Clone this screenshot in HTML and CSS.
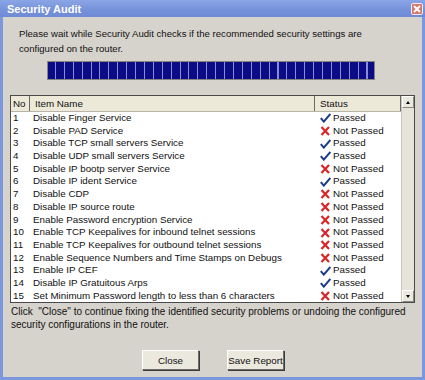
FILE: index.html
```html
<!DOCTYPE html>
<html lang="en">
<head>
    <meta charset="UTF-8">
    <title>Security Audit</title>
    <link rel="stylesheet" href="styles.css">
</head>
<body>
    <div class="window">
        <div class="titlebar">
            <span class="title">Security Audit</span>
            <span class="close-btn">
                <svg width="8" height="8" viewBox="0 0 8 8"><path d="M1 1 L7 7 M7 1 L1 7" stroke="#fff" stroke-width="2"/></svg>
            </span>
        </div>
        <div class="content">
            <p class="message">Please wait while Security Audit checks if the recommended security settings are configured on the router.</p>

            <div class="progress"><div class="progress-fill"></div></div>

            <div class="listbox">
                <div class="list">
                    <div class="row header">
                        <div class="col-no">No</div>
                        <div class="col-name">Item Name</div>
                        <div class="col-status">Status</div>
                    </div>
                    <div id="rows"></div>
                </div>
                <div class="scrollbar">
                    <div class="scroll-btn"><span class="arrow-up"></span></div>
                    <div class="scroll-track"></div>
                    <div class="scroll-btn"><span class="arrow-down"></span></div>
                </div>
            </div>

            <p class="note">Click &nbsp;"Close" to continue fixing the identified security problems or undoing the configured security configurations in the router.</p>

            <div class="buttons">
                <button class="btn">Close</button>
                <button class="btn">Save Report</button>
            </div>
        </div>
    </div>

    <script>
        // Audit items: name and whether it passed
        const items = [
            ['Disable Finger Service', true],
            ['Disable PAD Service', false],
            ['Disable TCP small servers Service', true],
            ['Disable UDP small servers Service', true],
            ['Disable IP bootp server Service', false],
            ['Disable IP ident Service', true],
            ['Disable CDP', false],
            ['Disable IP source route', false],
            ['Enable Password encryption Service', false],
            ['Enable TCP Keepalives for inbound telnet sessions', false],
            ['Enable TCP Keepalives for outbound telnet sessions', false],
            ['Enable Sequence Numbers and Time Stamps on Debugs', false],
            ['Enable IP CEF', true],
            ['Disable IP Gratuitous Arps', true],
            ['Set Minimum Password length to less than 6 characters', false]
        ];

        const checkIcon = '<svg class="icon" width="11" height="10" viewBox="0 0 11 10"><path d="M0.8 5.2 L3.8 8.6 L10.4 1" fill="none" stroke="#1c3a8c" stroke-width="2"/></svg>';
        const crossIcon = '<svg class="icon" width="11" height="10" viewBox="0 0 11 10"><path d="M1.5 1 L9 9 M9 1 L1.5 9" fill="none" stroke="#d8262a" stroke-width="2.2"/></svg>';

        let html = '';
        items.forEach((item, i) => {
            const passed = item[1];
            html += `
            <div class="row">
                <div class="col-no">${i + 1}</div>
                <div class="col-name">${item[0]}</div>
                <div class="col-status">${passed ? checkIcon : crossIcon}${passed ? 'Passed' : 'Not Passed'}</div>
            </div>`;
        });
        document.getElementById('rows').innerHTML = html;
    </script>
</body>
</html>
```

FILE: styles.css
```css
body {
    margin: 0;
    font-family: "Liberation Sans", Arial, sans-serif;
    font-size: 10px;
    color: #111;
}
.window {
    width: 425px;
    height: 380px;
    box-sizing: border-box;
    background-color: #d6d3cc;
    border: 3px solid #7b97dd;
    border-top: none;
    display: flex;
    flex-direction: column;
}
.titlebar {
    height: 17px;
    margin: 0 -3px;
    background: linear-gradient(to bottom, #8ba6e6, #7591da 60%, #6f8bd6);
    display: flex;
    align-items: center;
    justify-content: space-between;
    padding: 0 2px 0 7px;
}
.title {
    color: #fff;
    font-weight: bold;
    font-size: 11px;
}
.close-btn {
    width: 12px;
    height: 12px;
    background-color: #d4776c;
    border: 1px solid #f2e8ee;
    border-radius: 2px;
    box-sizing: border-box;
    display: flex;
    align-items: center;
    justify-content: center;
}
.content {
    flex: 1;
    padding: 0 6px 0 7px;
    display: flex;
    flex-direction: column;
}
.message {
    margin: 9px 0 0 9px;
    line-height: 15px;
    width: 345px;
    font-size: 9.6px;
}
.progress {
    margin: 5px 0 0 37px;
    width: 328px;
    height: 19px;
    box-sizing: border-box;
    border: 1px solid #86847e;
    background-color: #0b0b86;
}
.progress-fill {
    height: 100%;
    background: repeating-linear-gradient(to right, #0b0b86 0 7px, #8a8ad6 7px 8px, #0b0b86 8px 8.9px);
}
.listbox {
    margin: 15px 0 0 0;
    width: 405px;
    height: 208px;
    box-sizing: border-box;
    border: 1px solid #4a4a4a;
    display: flex;
    background-color: #fff;
}
.list {
    flex: 1;
    overflow: hidden;
}
.row {
    display: flex;
    height: 12.7px;
    line-height: 12.7px;
    white-space: nowrap;
    font-size: 9.8px;
}
.row.header {
    height: 15px;
    line-height: 15px;
    background-color: #ece9d8;
    border-bottom: 1px solid #b8b5a8;
}
.col-no {
    width: 19px;
    padding-left: 2px;
    box-sizing: border-box;
}
.col-name {
    width: 285px;
    padding-left: 3px;
    box-sizing: border-box;
    overflow: hidden;
}
.col-status {
    flex: 1;
    padding-left: 5px;
    display: flex;
    align-items: center;
}
.header .col-no,
.header .col-name {
    border-right: 1px solid #6b6a64;
}
.header .col-name {
    padding-left: 5px;
}
.header .col-status {
    border-right: 1px solid #6b6a64;
}
.icon {
    margin-right: 2px;
}
.scrollbar {
    width: 12px;
    display: flex;
    flex-direction: column;
    background-color: #e6e3da;
    border-left: 1px solid #c8c5bc;
}
.scroll-btn {
    height: 12px;
    background-color: #ebe8e0;
    border: 1px solid;
    border-color: #fff #8a8882 #8a8882 #fff;
    box-sizing: border-box;
    display: flex;
    align-items: center;
    justify-content: center;
}
.scroll-track {
    flex: 1;
}
.arrow-up {
    border: 2px solid transparent;
    border-bottom: 3px solid #000;
    border-top: none;
}
.arrow-down {
    border: 2px solid transparent;
    border-top: 3px solid #000;
    border-bottom: none;
}
.note {
    margin: 2px 0 0 1px;
    line-height: 13px;
}
.buttons {
    margin-top: 19px;
    display: flex;
    justify-content: center;
    gap: 28px;
}
.btn {
    width: 57px;
    height: 20px;
    padding: 0;
    white-space: nowrap;
    font-family: "Liberation Sans", Arial, sans-serif;
    font-size: 9.8px;
    color: #111;
    background-color: #ebe8de;
    border: 1px solid;
    border-color: #fff #6e6c66 #6e6c66 #fff;
    box-shadow: 1px 1px 0 #3c3b38;
}
```
